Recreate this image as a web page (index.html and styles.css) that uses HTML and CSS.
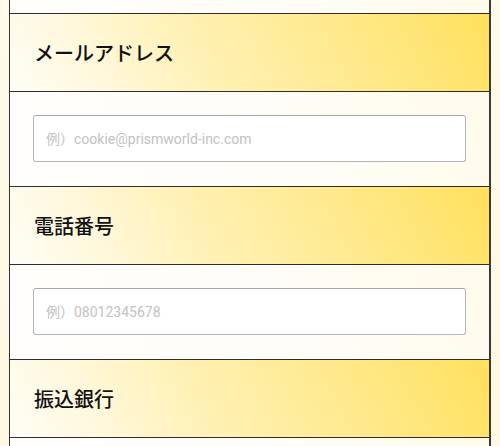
FILE: index.html
```html
<!DOCTYPE html>
<html lang="ja">
<head>
<meta charset="utf-8">
<link rel="stylesheet" href="styles.css">
</head>
<body>
<div class="page">
  <div class="form">
    <div class="row input-row top-cut"></div>
    <div class="row head"><h2 class="label">メールアドレス</h2></div>
    <div class="row input-row">
      <input class="field" type="email" placeholder="例）cookie@prismworld-inc.com">
    </div>
    <div class="row head"><h2 class="label">電話番号</h2></div>
    <div class="row input-row">
      <input class="field" type="tel" placeholder="例）08012345678">
    </div>
    <div class="row head"><h2 class="label">振込銀行</h2></div>
    <div class="row input-row"></div>
  </div>
</div>
</body>
</html>
```
FILE: styles.css
```css
html, body {
  margin: 0;
  padding: 0;
  height: 446px;
  overflow: hidden;
}
body {
  background: linear-gradient(180deg, #fffaea 0%, #fff8e2 100%);
  font-family: "Noto Sans CJK JP", "Noto Sans", sans-serif;
}
.page {
  padding: 0 9px 0 9px;
}
.form {
  border-left: 1px solid #333;
  border-right: 2px solid #3a3a3a;
  background: #fff;
}
.row {
  border-top: 1px solid #2e2e2e;
  box-sizing: border-box;
}
.head {
  height: 77.5px;
  display: flex;
  align-items: center;
  padding-left: 24px;
  background: linear-gradient(62deg, #fffdf6 0%, #fff8dc 18%, #fff1b4 40%, #ffeb96 62%, #ffe576 84%, #ffe05c 100%);
}
.label {
  margin: 0;
  font-size: 20px;
  font-weight: 500;
  color: #111;
  letter-spacing: 0;
}
.input-row {
  height: 95.5px;
  display: flex;
  align-items: center;
  padding: 0 23px;
  background: linear-gradient(60deg, #fffefc 0%, #fffdf8 55%, #fffaea 100%);
}
.input-row.top-cut {
  border-top: none;
  height: 13px;
}
.field {
  width: 100%;
  height: 47px;
  box-sizing: border-box;
  border: 1px solid #b4b4b4;
  border-top-color: #a8a8a8;
  border-radius: 3px;
  background: #fff;
  padding: 0 12px;
  font-family: Roboto, "Noto Sans CJK JP", sans-serif;
  font-size: 14px;
  color: #333;
  outline: none;
}
.field::placeholder {
  color: #c2c2c2;
}
```
